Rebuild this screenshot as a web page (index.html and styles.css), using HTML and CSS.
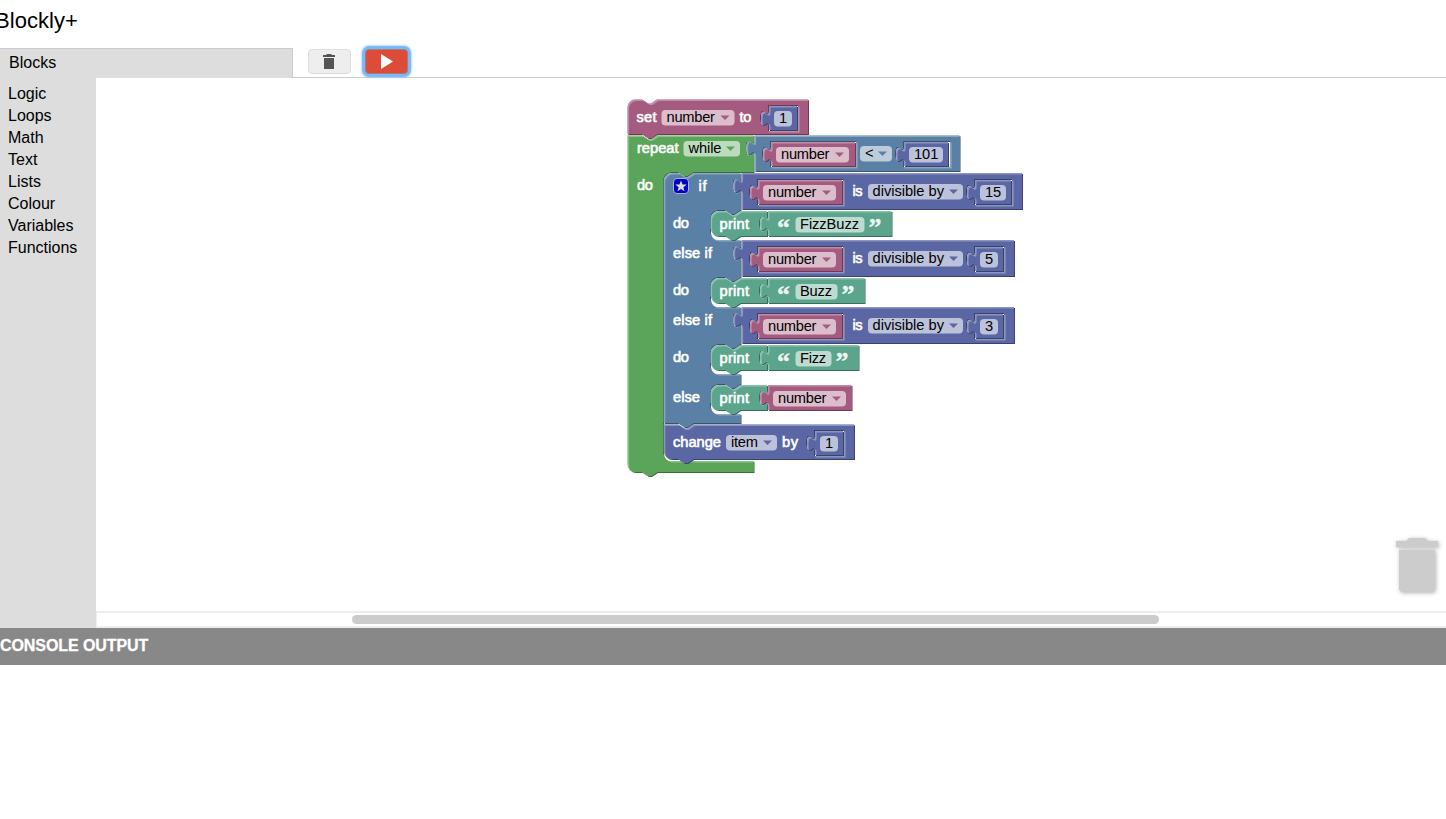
FILE: index.html
```html
<!DOCTYPE html>
<html lang="en">
<head>
<meta charset="utf-8">
<title>Blockly+</title>
<link rel="stylesheet" href="styles.css">
</head>
<body>
<header class="title">Blockly+</header>
<nav class="toolbar">
  <div class="tab">Blocks</div>
  <button class="btn" aria-label="Discard">
    <svg class="icon-discard" width="12" height="15" viewBox="0 0 12 15"><path d="M0 1h3l1-1h4l1 1h3v2H0zM1 4h10v11H1z" fill="#555"/></svg>
  </button>
  <button class="btn btn-run" aria-label="Run">
    <svg width="12" height="15" viewBox="0 0 12 15"><path d="M0 0L12 7.5 0 15z" fill="#fff"/></svg>
  </button>
</nav>
<main class="editor">
  <ul class="toolbox">
    <li>Logic</li><li>Loops</li><li>Math</li><li>Text</li><li>Lists</li><li>Colour</li><li>Variables</li><li>Functions</li>
  </ul>
  <section class="workspace">
    <svg class="canvas" id="canvas" width="1350" height="534" viewBox="96 78 1350 534">
      <g class="trash">
        <path d="M1396 541h10c2 0 1-3 4-3h14c3 0 2 3 4 3h10v6h-42z"/>
        <path d="M1399 550h36v38q0 4-4 4h-28q-4 0-4-4z"/>
      </g>
    </svg>
    <div class="scrollbar"><div class="handle"></div></div>
  </section>
</main>
<section class="console"><h2 class="console-title">CONSOLE OUTPUT</h2></section>
<script src="blocks.js"></script>
</body>
</html>
```
FILE: styles.css
```css
body {
  margin: 0;
  height: 819px;
  overflow: hidden;
  display: flex;
  flex-direction: column;
  background: #fff;
  color: #000;
  font-family: "Liberation Sans", Arial, sans-serif;
  font-size: 16px;
}
.title {
  height: 48px;
  box-sizing: border-box;
  padding-top: 8px;
  margin-left: -5px;
  font-size: 22px;
  line-height: 25px;
  letter-spacing: 0.05px;
}
.toolbar {
  display: flex;
  align-items: flex-start;
  height: 30px;
  box-sizing: border-box;
  border-bottom: 1px solid #ccc;
}
.tab {
  width: 293px;
  height: 30px;
  box-sizing: border-box;
  padding-left: 9px;
  margin-right: 15px;
  border-top: 1px solid #ccc;
  border-right: 1px solid #ccc;
  background: #ddd;
  line-height: 27px;
}
.btn {
  display: flex;
  align-items: center;
  justify-content: center;
  width: 43px;
  height: 25px;
  margin: 1px 14px 0 0;
  padding: 0;
  border: 1px solid #ddd;
  border-radius: 4px;
  background: #eee;
}
.icon-discard { margin-right: 2px; }
.btn-run {
  border-color: #a08078;
  background: #dd4b39;
  box-shadow: 0 0 1px 3px #7bb8f8, 0 0 3px 3px #8cc3fb;
}
.editor {
  display: flex;
  height: 550px;
}
.toolbox {
  width: 96px;
  box-sizing: border-box;
  margin: 0;
  padding: 5px 0 0 8px;
  list-style: none;
  background: #ddd;
  line-height: 22px;
}
.workspace {
  display: flex;
  flex-direction: column;
  flex: 1;
}
.canvas {
  display: block;
  font-family: "Liberation Sans", Arial, sans-serif;
  font-size: 14.67px;
}
.label {
  fill: #fff;
  stroke: #fff;
  stroke-width: 0.6px;
}
.field { fill: #fff; fill-opacity: 0.6; }
.value { fill: #000; }
.quote {
  fill: #fff;
  fill-opacity: 0.9;
  stroke: #fff;
  stroke-width: 0.3px;
  font-family: "Liberation Serif", serif;
  font-weight: bold;
  font-size: 26px;
}
.trash {
  fill: #ccc;
  filter: drop-shadow(1px 1px 2px rgba(0, 0, 0, 0.3));
}
.scrollbar {
  height: 16px;
  box-sizing: border-box;
  border: 1px solid #eee;
  border-top-width: 2px;
  border-right: 0;
  border-bottom-width: 2px;
  padding: 1px 0 0 255px;
}
.workspace .scrollbar {
  height: 17px;
  margin-top: -1px;
  padding-top: 2px;
}
.handle {
  width: 807px;
  height: 9px;
  border-radius: 4.5px;
  background: #ccc;
}
.console-title {
  margin: 0;
  height: 37px;
  background: #888;
  color: #fff;
  font-size: 16px;
  line-height: 35px;
  letter-spacing: -0.08px;
  -webkit-text-stroke: 0.3px #fff;
}
```
FILE: blocks.js
```js
const NS = 'http://www.w3.org/2000/svg';
const canvas = document.getElementById('canvas');
const PINK = '#a55b80', GREEN = '#5ba55b', LOGIC = '#5b80a5', MATH = '#5b67a5', TEXT = '#5ba58c';
const TAB_DOWN = 'v5c0,10 -8,-8 -8,7.5s8,-2.5 8,7.5';
const TAB_UP = 'c0,-10 -8,8 -8,-7.5s8,2.5 8,-7.5';
const NOTCH_L = 'l6,4h3l6,-4';
const NOTCH_R = 'l-6,4h-3l-6,-4';
let count = 0;

function el(name, attrs, parent = canvas) {
  const e = document.createElementNS(NS, name);
  for (const k in attrs) e.setAttribute(k, attrs[k]);
  parent.appendChild(e);
  return e;
}
function mix(hex, target, f) {
  const c = [1, 3, 5].map(i => parseInt(hex.substr(i, 2), 16));
  return `rgb(${c.map(v => Math.round(v + (target - v) * f))})`;
}
// Bevelled block: dark edge below right, light edge above left.
function block(colour, d) {
  const id = 'clip' + count++;
  el('path', { d }, el('clipPath', { id }));
  el('path', { d, fill: mix(colour, 0, 0.35), transform: 'translate(1,1)' });
  const light = mix(colour, 255, 0.3);
  el('path', { d, fill: light });
  const g = el('g', { 'clip-path': `url(#${id})` });
  el('path', { d, fill: colour, transform: 'translate(1.6,1.6)' }, g);
}
// Counter-clockwise subpath that leaves a socket for the value block at x,y.
function socket(x, y, r, b) {
  return `M${x - 1},${y - 1}${TAB_DOWN}V${b}H${r}V${y - 1}z`;
}
function valueBlock(colour, x, y, r, b, holes = '') {
  block(colour, `M${x},${y}H${r - 1}V${b - 1}H${x}V${y + 20}${TAB_UP}z${holes}`);
}
function mouth(x, y, bottom) {
  return `H${x + 30}${NOTCH_R}h-7a8,8 0 0,0 -8,8V${bottom - 8}a8,8 0 0,0 8,8`;
}
function label(x, y, s, len) {
  el('text', { x, y, textLength: len, class: 'label' }).textContent = s;
}
function field(x, y, w, tx, s, len) {
  el('rect', { x, y, width: w, height: 15.5, rx: 4, class: 'field' });
  el('text', { x: tx, y: y + 12, textLength: len, class: 'value' }).textContent = s;
}
function menu(x, y, w, s, len, colour, tx = x + 5) {
  field(x, y, w, tx, s, len);
  el('path', { d: `M${x + w - 14},${y + 5.5}h9l-4.5,4.5z`, fill: colour });
}
function variable(x, y) {
  valueBlock(PINK, x, y, x + 85, y + 25);
  menu(x + 5, y + 5, 73, 'number', 48.5, PINK, x + 10);
}
function number(x, y, s) {
  const w = 18 + (s.length - 1) * 8;
  valueBlock(MATH, x, y, x + w + 11, y + 25);
  field(x + 5, y + 5, w, x + 10, s, s.length * 8.1);
}
function print(y) {
  block(TEXT, `M710.5,${y + 8}a8,8 0 0,1 8,-8H725.3${NOTCH_L}H767${TAB_DOWN}V${y + 25}H740.3${NOTCH_R}H718.5a8,8 0 0,1 -8,-8z`);
  label(719.5, y + 18, 'print', 29.5);
}
function printText(y, s, len) {
  print(y);
  valueBlock(TEXT, 768, y, 833.5 + len, y + 26);
  field(795.5, y + 6, len + 10, 800, s, len);
  el('text', { x: 777, y: y + 25, class: 'quote' }).textContent = '“';
  el('text', { x: 809.5 + len, y: y + 25, class: 'quote' }).textContent = '”';
}
function divisible(y, s) {
  const r = s.length > 1 ? 1023 : 1015;
  valueBlock(MATH, 741.5, y, r, y + 37, socket(758, y + 7, 843, y + 32) + socket(975, y + 7, r - 11, y + 32));
  variable(758, y + 7);
  label(852.5, y + 23, 'is', 10);
  menu(868, y + 11, 95, 'divisible by', 71.5, MATH, 872.5);
  number(975, y + 7, s);
}

block(PINK, `M627.3,107.3a8,8 0 0,1 8,-8H642${NOTCH_L}H808V134H657${NOTCH_R}H627.3z${socket(769, 106, 798, 131)}`);
label(636.5, 122, 'set', 20);
menu(661.5, 110, 73, 'number', 48.5, PINK, 666.5);
label(739.5, 122, 'to', 12);
number(769, 106, '1');

block(GREEN, `M627.3,135.3H642${NOTCH_L}H753.5${TAB_DOWN}V172${mouth(663, 172, 461)}H753.5V472H657${NOTCH_R}H635.3a8,8 0 0,1 -8,-8z`);
label(637, 153, 'repeat', 41.5);
menu(683.5, 141, 56.5, 'while', 33, GREEN);
label(637, 190, 'do', 16);

valueBlock(LOGIC, 754.5, 135.3, 960.5, 172, socket(771, 142, 856, 167) + socket(904, 142, 950, 167));
variable(771, 142);
menu(860, 146, 32, '<', 8.5, LOGIC);
number(904, 142, '101');

block(LOGIC, `M663.7,181a8,8 0 0,1 8,-8H678.5${NOTCH_L}H740.5${TAB_DOWN}V210${mouth(710, 210, 240)}` +
  `H740.5${TAB_DOWN}V277${mouth(710, 277, 307)}H740.5${TAB_DOWN}V344${mouth(710, 344, 374)}` +
  `H740.5V384${mouth(710, 384, 414)}H740.5V423H693.3${NOTCH_R}H663.7z`);
el('rect', { x: 673.5, y: 178.5, width: 15, height: 15, rx: 3.5, fill: '#0000c8', stroke: '#a9b4dc' });
el('path', { d: 'M681,180.5l1.5,3.9 4.2,.2 -3.3,2.6 1.1,4 -3.5,-2.3 -3.5,2.3 1.1,-4 -3.3,-2.6 4.2,-.2z', fill: '#ddd' });
label(698.5, 190.5, 'if', 8);
label(673, 228, 'do', 16);
label(673, 258, 'else if', 39);
label(673, 295, 'do', 16);
label(673, 325, 'else if', 39);
label(673, 362, 'do', 16);
label(673, 402, 'else', 27);

divisible(173, '15');
printText(211, 'FizzBuzz', 59);
divisible(240, '5');
printText(278, 'Buzz', 32);
divisible(307, '3');
printText(345, 'Fizz', 26);
print(385);
valueBlock(PINK, 768, 385, 852.5, 411);
menu(773, 391, 73, 'number', 48.5, PINK, 778);

block(MATH, `M663.7,424.3H678.3${NOTCH_L}H854V459H693.3${NOTCH_R}H671.7a8,8 0 0,1 -8,-8z${socket(815, 431, 844, 456)}`);
label(673, 447, 'change', 48);
menu(726, 435, 51, 'item', 27, MATH);
label(782, 447, 'by', 16);
number(815, 431, '1');
```
